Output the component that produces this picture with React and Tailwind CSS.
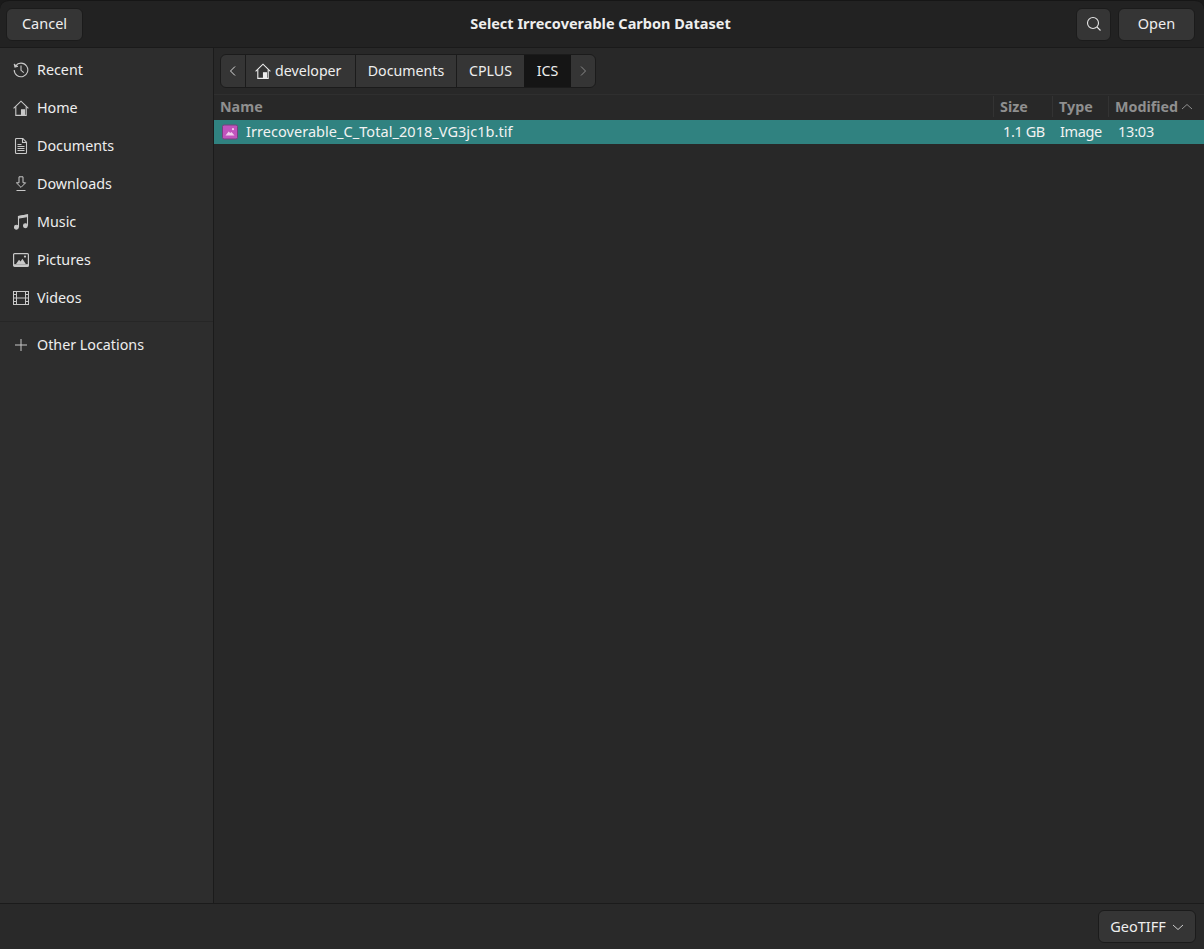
import { useState } from "react";

const stroke = "#c8c8c8";

function RecentIcon() {
  return (
    <svg width="16" height="16" viewBox="0 0 16 16" fill="none" stroke={stroke} strokeWidth="1.1">
      <path d="M2.6 3.8A6.8 6.8 0 1 1 1.2 8" />
      <path d="M1.2 1.8 2 5l3-.8" fill={stroke} />
      <path d="M8 3.5v4.8l2.8 2.4" />
    </svg>
  );
}

function HomeIcon({ color = stroke }) {
  return (
    <svg width="16" height="16" viewBox="0 0 16 16" fill="none" stroke={color} strokeWidth="1.1">
      <path d="M.6 8.4 8 1.2l7.4 7.2" />
      <path d="M2.8 6.4v9h10.4v-9" />
      <path d="M8.5 15.4V9.8h3v5.6z" fill={color} />
    </svg>
  );
}

function DocumentIcon() {
  return (
    <svg width="16" height="16" viewBox="0 0 16 16" fill="none" stroke={stroke} strokeWidth="1.1">
      <path d="M2.5 1.5q0-1 1-1h6.3l3.7 3.7v10.3q0 1-1 1h-9q-1 0-1-1z" />
      <path d="M9.5 .8v3.7h3.7" />
      <path d="M4.5 6.5h4M4.5 8.5h7M4.5 10.5h7M4.5 12.5h7" />
    </svg>
  );
}

function DownloadIcon() {
  return (
    <svg width="16" height="16" viewBox="0 0 16 16" fill="none" stroke={stroke} strokeWidth="1">
      <path d="M6 .8h4v6h2.6L8 11.4 3.4 6.8H6z" />
      <path d="M3.5 14.5h9" />
    </svg>
  );
}

function MusicIcon() {
  return (
    <svg width="16" height="16" viewBox="0 0 16 16" fill={stroke} stroke={stroke} strokeWidth="1.1">
      <path d="M5.5 13V2.5l9-1.5v10.5" fill="none" />
      <path d="M5.5 2.5l9-1.5v1.6l-9 1.5z" />
      <circle cx="3.4" cy="13.2" r="1.9" />
      <circle cx="12.4" cy="11.7" r="1.9" />
    </svg>
  );
}

function PictureIcon() {
  return (
    <svg width="16" height="16" viewBox="0 0 16 16" fill="none" stroke={stroke} strokeWidth="1.2">
      <rect x="0.6" y="1.6" width="14.8" height="12.8" rx="1" />
      <path d="M1 12.2h14v2H1z" fill={stroke} stroke="none" />
      <path d="M3 12l3-4.2 1.6 1.7L9.4 6.8l3.4 5.2z" fill={stroke} stroke="none" />
      <circle cx="12" cy="4.6" r="1.1" fill={stroke} stroke="none" />
    </svg>
  );
}

function VideoIcon() {
  return (
    <svg width="16" height="16" viewBox="0 0 16 16" fill="none" stroke={stroke} strokeWidth="1">
      <rect x="0.5" y="1.5" width="15" height="13" />
      <path d="M3.5 1.5v13M12.5 1.5v13M3.5 8h9M.5 4.5h3M.5 8h3M.5 11.5h3M12.5 4.5h3M12.5 8h3M12.5 11.5h3" />
    </svg>
  );
}

function PlusIcon() {
  return (
    <svg width="16" height="16" viewBox="0 0 16 16" fill="none" stroke={stroke} strokeWidth="1">
      <path d="M8 2v12M2 8h12" />
    </svg>
  );
}

function Chevron({ dir, color }) {
  const paths = {
    left: "M10 3.5 5.5 8l4.5 4.5",
    right: "M6 3.5 10.5 8 6 12.5",
    down: "M3 6l5 4.5L13 6",
    up: "M3 10l5-4.5 5 4.5",
  };
  return (
    <svg width="16" height="16" viewBox="0 0 16 16" fill="none" stroke={color} strokeWidth="1">
      <path d={paths[dir]} />
    </svg>
  );
}

function SearchIcon() {
  return (
    <svg width="16" height="16" viewBox="0 0 16 16" fill="none" stroke="#e6e6e6" strokeWidth="1.1">
      <circle cx="7" cy="7" r="5.5" />
      <path d="M11 11l3.5 3.5" />
    </svg>
  );
}

function TifIcon() {
  return (
    <svg width="16" height="16" viewBox="0 0 16 16">
      <rect x="0.5" y="1" width="15" height="14" rx="1.5" fill="#c053bd" stroke="#75407f" />
      <path d="M3.5 11.5l3.2-4 1.5 1.6 1.3-1 3 3.4z" fill="#f0cdee" />
      <circle cx="11" cy="5.2" r="1.1" fill="#f0cdee" />
    </svg>
  );
}

const places = [
  { name: "Recent", icon: <RecentIcon /> },
  { name: "Home", icon: <HomeIcon /> },
  { name: "Documents", icon: <DocumentIcon /> },
  { name: "Downloads", icon: <DownloadIcon /> },
  { name: "Music", icon: <MusicIcon /> },
  { name: "Pictures", icon: <PictureIcon /> },
  { name: "Videos", icon: <VideoIcon /> },
];

const btn =
  "h-[33px] rounded-[6px] border border-[#1b1b1b] bg-[#353535] text-[#eeeeee] flex items-center justify-center";

export default function App() {
  const [selected] = useState(true);

  return (
    <div className="flex h-[949px] w-[1204px] flex-col overflow-hidden bg-[#1a1a1a] font-['Noto_Sans','Open_Sans',sans-serif] text-[14.5px] text-[#eeeeee]">
      {/* header bar */}
      <div className="grid h-[48px] shrink-0 grid-cols-[1fr_auto_1fr] items-center rounded-t-[9px] border-t border-b border-t-[#161616] border-b-[#1a1a1a] bg-[#222222] pl-[6px] pr-[9px]">
        <div>
          <button className={`${btn} w-[77px]`}>Cancel</button>
        </div>
        <div className="text-center font-bold text-[#eeeeee]">
          Select Irrecoverable Carbon Dataset
        </div>
        <div className="flex justify-end gap-[7px]">
          <button className={`${btn} w-[35px]`}>
            <SearchIcon />
          </button>
          <button className={`${btn} w-[77px]`}>Open</button>
        </div>
      </div>

      <div className="flex min-h-0 flex-1">
        {/* places sidebar */}
        <div className="w-[214px] shrink-0 border-r border-[#1b1b1b] bg-[#2d2d2d] text-[14.3px]">
          <div className="pt-[3px]">
            {places.map((p) => (
              <div key={p.name} className="flex h-[38px] items-center gap-[8px] pl-[13px]">
                {p.icon}
                <span>{p.name}</span>
              </div>
            ))}
          </div>
          <div className="mt-[4px] border-t border-[#262626]" />
          <div className="mt-[4px] flex h-[38px] items-center gap-[8px] pl-[13px]">
            <PlusIcon />
            <span>Other Locations</span>
          </div>
        </div>

        {/* file list */}
        <div className="flex min-w-0 flex-1 flex-col bg-[#282828]">
          <div className="flex h-[47px] shrink-0 items-center border-b border-[#2f2f2f] pl-[6px]">
            <div className="flex h-[34px] overflow-hidden rounded-[6px] border border-[#1b1b1b] bg-[#353535] text-[14.2px]">
              <div className="flex w-[25px] items-center justify-center border-r border-[#1b1b1b]">
                <Chevron dir="left" color="#dddddd" />
              </div>
              <div className="flex w-[110px] items-center gap-[4px] border-r border-[#1b1b1b] pl-[9px]">
                <HomeIcon color="#eeeeee" />
                <span>developer</span>
              </div>
              <div className="flex w-[101px] items-center justify-center border-r border-[#1b1b1b]">
                Documents
              </div>
              <div className="flex w-[67px] items-center justify-center">CPLUS</div>
              <div className="flex w-[47px] items-center justify-center bg-[#151515]">ICS</div>
              <div className="flex w-[24px] items-center justify-center">
                <Chevron dir="right" color="#8a8a8a" />
              </div>
            </div>
          </div>

          <div className="flex h-[25px] shrink-0 items-center pb-[2px] text-[14.3px] font-bold text-[#8f8f8f]">
            <div className="flex-1 pl-[6px]">Name</div>
            <div className="w-[59px] border-l border-[#333333] pl-[6px]">Size</div>
            <div className="w-[56px] border-l border-[#333333] pl-[6px]">Type</div>
            <div className="flex w-[96px] items-center border-l border-[#333333] pl-[6px]">
              Modified
              <span className="ml-[1px]">
                <Chevron dir="up" color="#8f8f8f" />
              </span>
            </div>
          </div>

          {selected && (
            <div className="flex h-[24px] shrink-0 items-center bg-[#308280] text-[#f2f2f2]">
              <div className="flex flex-1 items-center gap-[8px] pl-[8px] tracking-[0.05px]">
                <TifIcon />
                <span>Irrecoverable_C_Total_2018_VG3jc1b.tif</span>
              </div>
              <div className="w-[59px] pl-[10px] tracking-[-0.4px]">1.1 GB</div>
              <div className="w-[56px] pl-[8px] tracking-[-0.4px]">Image</div>
              <div className="w-[96px] pl-[10px] tracking-[-0.2px]">13:03</div>
            </div>
          )}
        </div>
      </div>

      {/* footer with filter */}
      <div className="flex h-[46px] shrink-0 items-center justify-end border-t border-[#1b1b1b] bg-[#292929] pr-[8px]">
        <button className={`${btn} w-[98px] gap-[4px] pl-[2px]`}>
          GeoTIFF
          <Chevron dir="down" color="#cccccc" />
        </button>
      </div>
    </div>
  );
}
